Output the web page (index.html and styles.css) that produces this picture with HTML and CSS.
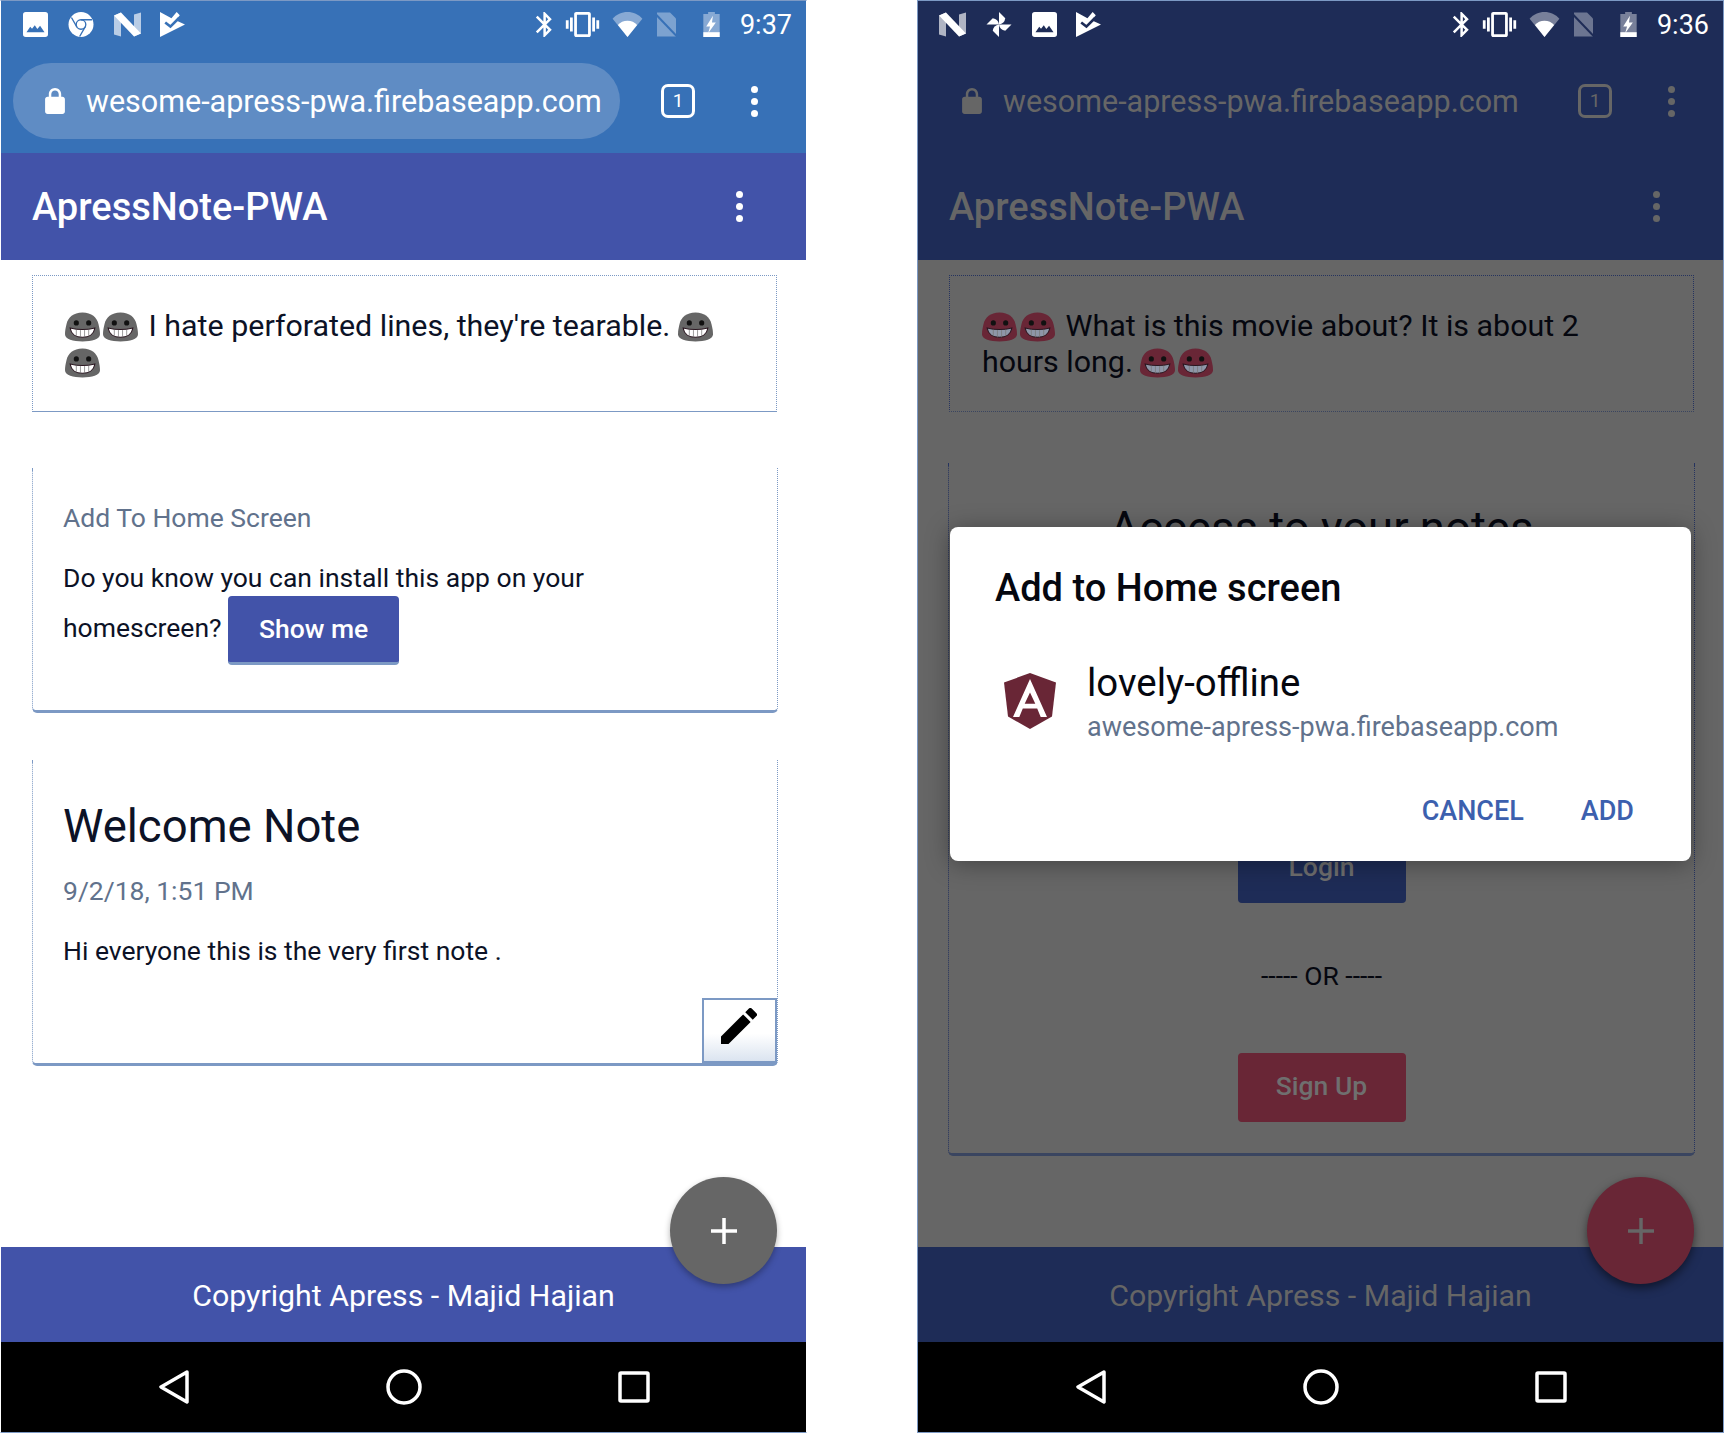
FILE: index.html
```html
<!DOCTYPE html>
<html lang="en">
<head>
    <meta charset="UTF-8">
    <title>ApressNote-PWA</title>
    <link rel="stylesheet" href="styles.css">
</head>
<body>
    <svg class="sprite" xmlns="http://www.w3.org/2000/svg">
        <symbol id="i-image" viewBox="3 3 18 18"><path fill-rule="evenodd" d="M5 3h14a2 2 0 0 1 2 2v14a2 2 0 0 1-2 2H5a2 2 0 0 1-2-2V5a2 2 0 0 1 2-2zm.5 14.500h13l-3.200-4.600-2 2.400-1.800-2.800-2 2.600-1.300-1.500z"/></symbol>
        <symbol id="i-chrome" viewBox="0 0 24 24"><circle cx="12" cy="12" r="12"/><circle class="cut" cx="12" cy="12" r="4.600" fill="none" stroke-width="1.300"/><path class="cut" fill="none" stroke-width="1.300" d="M12 7.400h10.500M8 14.300L2.800 5.300M16 14.300l-5.300 9.200"/></symbol>
        <symbol id="i-n" viewBox="0 0 27 24"><path opacity=".65" d="M0 3l7-3v24l-7-2zM20 2l7-2v21l-7 3z"/><path d="M0 3l7-3 20 21-7 3z"/></symbol>
        <symbol id="i-check" viewBox="0 0 24 24"><path d="M0 0l11 6 5-6 3 3-4 5 9 4L0 24z"/><path class="cut" fill="none" stroke-width="2.500" d="M5 10l5 4 8-8"/></symbol>
        <symbol id="i-pinwheel" viewBox="0 0 24 24">
            <path d="M12 12V0l6 6a7 7 0 0 1-6 6z"/>
            <path d="M12 12V0l6 6a7 7 0 0 1-6 6z" transform="rotate(90 12 12)"/>
            <path d="M12 12V0l6 6a7 7 0 0 1-6 6z" transform="rotate(180 12 12)"/>
            <path d="M12 12V0l6 6a7 7 0 0 1-6 6z" transform="rotate(270 12 12)"/>
        </symbol>
        <symbol id="i-bluetooth" viewBox="5 2 13 20"><path d="M17.710 7.710L12 2h-1v7.590L6.410 5 5 6.410 10.590 12 5 17.590 6.410 19 11 14.410V22h1l5.710-5.710-4.300-4.290 4.300-4.290zM13 5.830l1.880 1.880L13 9.590V5.830zm1.880 10.460L13 18.170v-3.760l1.880 1.880z"/></symbol>
        <symbol id="i-vibrate" viewBox="0 3 24 18"><path d="M0 15h2V9H0v6zm3 2h2V7H3v10zm19-8v6h2V9h-2zm-3 8h2V7h-2v10zM16.500 3h-9C6.670 3 6 3.670 6 4.500v15c0 .83.67 1.500 1.500 1.500h9c.83 0 1.500-.67 1.500-1.500v-15c0-.83-.67-1.500-1.500-1.500zM16 19H8V5h8v14z"/></symbol>
        <symbol id="i-wifi" viewBox="0 0 31 26"><path opacity=".4" d="M15.500 26L0 7C4 2.500 9.500 0 15.500 0S27 2.500 31 7z"/><path d="M15.500 26L5.500 13.500C8 10.500 11.500 9 15.500 9s7.500 1.500 10 4.500z"/></symbol>
        <symbol id="i-nosim" viewBox="0 0 22 24"><path opacity=".35" d="M2 0h13l6 6v18H2z"/><path class="cut" fill="none" stroke-width="2" d="M0 1l22 23"/></symbol>
        <symbol id="i-battery" viewBox="0 0 17 26"><path opacity=".4" d="M5 0h7v2h5v24H0V2h5z"/><path d="M0 21h17v5H0z"/><path d="M10 4L3 15h4l-2 7 8-11H9z"/></symbol>
        <symbol id="i-lock" viewBox="4 1 16 21"><path d="M18 8h-1V6c0-2.760-2.240-5-5-5S7 3.240 7 6v2H6c-1.100 0-2 .9-2 2v10c0 1.100.9 2 2 2h12c1.100 0 2-.9 2-2V10c0-1.100-.9-2-2-2zM9 6c0-1.660 1.340-3 3-3s3 1.340 3 3v2H9V6z"/></symbol>
        <symbol id="i-pencil" viewBox="3 3 18 18"><path d="M3 17.250V21h3.750L17.810 9.940l-3.750-3.750L3 17.250zM20.710 7.040a1 1 0 0 0 0-1.410l-2.340-2.340a1 1 0 0 0-1.410 0l-1.830 1.830 3.750 3.750 1.830-1.830z"/></symbol>
        <symbol id="i-blob" viewBox="0 0 34 28">
            <path d="M17 0c9 0 14 5 15.500 11 1 4 1.500 7 1.500 10 0 5-8 7-17 7S0 26 0 21c0-3 .5-6 1.500-10C3 5 8 0 17 0z"/>
            <circle cx="11" cy="10" r="2.500" fill="#111"/><circle cx="23" cy="10" r="2.500" fill="#111"/>
            <path class="teeth" stroke="#2a1620" stroke-width="1" d="M5 15c8 2 16 2 24 0-1 6-6 9-12 9S6 21 5 15z"/>
            <path fill="none" stroke="#777" stroke-width=".7" d="M11 16.500v6M15 17v7M19 17v7M23 16.500v6"/>
        </symbol>
    </svg>

    <!-- left phone -->
    <div class="phone">
        <div class="chrome">
            <div class="status">
                <div class="status-icons">
                    <svg class="icon w25"><use href="#i-image"/></svg>
                    <svg class="icon w28"><use href="#i-chrome"/></svg>
                    <svg class="icon w27"><use href="#i-n"/></svg>
                    <svg class="icon w25"><use href="#i-check"/></svg>
                </div>
                <div class="status-icons right">
                    <svg class="icon w18"><use href="#i-bluetooth"/></svg>
                    <svg class="icon w35"><use href="#i-vibrate"/></svg>
                    <svg class="icon w31"><use href="#i-wifi"/></svg>
                    <svg class="icon w22"><use href="#i-nosim"/></svg>
                    <svg class="icon w17 battery"><use href="#i-battery"/></svg>
                    <span class="time">9:37</span>
                </div>
            </div>
            <div class="address">
                <div class="pill">
                    <svg class="lock"><use href="#i-lock"/></svg>
                    <span class="url">wesome-apress-pwa.firebaseapp.com</span>
                </div>
                <span class="tabs">1</span>
                <div class="dots"><i></i><i></i><i></i></div>
            </div>
        </div>
        <header class="topbar">
            <span class="brand">ApressNote-PWA</span>
            <div class="dots"><i></i><i></i><i></i></div>
        </header>
        <main class="content">
            <div class="joke">
                <svg class="blob"><use href="#i-blob"/></svg><svg class="blob"><use href="#i-blob"/></svg>
                I hate perforated lines, they're tearable.
                <svg class="blob"><use href="#i-blob"/></svg><svg class="blob"><use href="#i-blob"/></svg>
            </div>
            <section class="card">
                <p class="muted">Add To Home Screen</p>
                <p class="install">Do you know you can install this app on your homescreen? <button class="btn">Show me</button></p>
            </section>
            <section class="card note">
                <h2 class="note-title">Welcome Note</h2>
                <p class="muted note-date">9/2/18, 1:51 PM</p>
                <p class="note-body">Hi everyone this is the very first note .</p>
                <button class="edit"><svg class="pencil"><use href="#i-pencil"/></svg></button>
            </section>
        </main>
        <footer class="footer">Copyright Apress - Majid Hajian</footer>
        <nav class="navbar">
            <svg class="nav-icon tri" viewBox="0 0 30 34"><path d="M28 2L2 17l26 15z"/></svg>
            <svg class="nav-icon circ" viewBox="0 0 36 36"><circle cx="18" cy="18" r="16"/></svg>
            <svg class="nav-icon squ" viewBox="0 0 32 32"><rect x="2" y="2" width="28" height="28" rx="1"/></svg>
        </nav>
        <div class="fab"><svg viewBox="0 0 28 28"><path d="M14 1v26M1 14h26"/></svg></div>
    </div>

    <!-- right phone, page dimmed behind the install dialog -->
    <div class="phone dim">
        <div class="chrome">
            <div class="status">
                <div class="status-icons">
                    <svg class="icon w27"><use href="#i-n"/></svg>
                    <svg class="icon w28"><use href="#i-pinwheel"/></svg>
                    <svg class="icon w25"><use href="#i-image"/></svg>
                    <svg class="icon w25"><use href="#i-check"/></svg>
                </div>
                <div class="status-icons right">
                    <svg class="icon w18"><use href="#i-bluetooth"/></svg>
                    <svg class="icon w35"><use href="#i-vibrate"/></svg>
                    <svg class="icon w31"><use href="#i-wifi"/></svg>
                    <svg class="icon w22"><use href="#i-nosim"/></svg>
                    <svg class="icon w17 battery"><use href="#i-battery"/></svg>
                    <span class="time">9:36</span>
                </div>
            </div>
            <div class="address">
                <div class="pill">
                    <svg class="lock"><use href="#i-lock"/></svg>
                    <span class="url">wesome-apress-pwa.firebaseapp.com</span>
                </div>
                <span class="tabs">1</span>
                <div class="dots"><i></i><i></i><i></i></div>
            </div>
        </div>
        <header class="topbar">
            <span class="brand">ApressNote-PWA</span>
            <div class="dots"><i></i><i></i><i></i></div>
        </header>
        <main class="content">
            <div class="joke">
                <svg class="blob"><use href="#i-blob"/></svg><svg class="blob"><use href="#i-blob"/></svg>
                What is this movie about? It is about 2 hours long.
                <svg class="blob"><use href="#i-blob"/></svg><svg class="blob"><use href="#i-blob"/></svg>
            </div>
            <section class="card login">
                <h2 class="login-title">Access to your notes</h2>
                <button class="btn wide">Login</button>
                <p class="or">----- OR -----</p>
                <button class="btn wide red">Sign Up</button>
            </section>
        </main>
        <footer class="footer">Copyright Apress - Majid Hajian</footer>
        <nav class="navbar">
            <svg class="nav-icon tri" viewBox="0 0 30 34"><path d="M28 2L2 17l26 15z"/></svg>
            <svg class="nav-icon circ" viewBox="0 0 36 36"><circle cx="18" cy="18" r="16"/></svg>
            <svg class="nav-icon squ" viewBox="0 0 32 32"><rect x="2" y="2" width="28" height="28" rx="1"/></svg>
        </nav>
        <div class="fab"><svg viewBox="0 0 28 28"><path d="M14 1v26M1 14h26"/></svg></div>

        <div class="dialog">
            <h3 class="dialog-title">Add to Home screen</h3>
            <div class="app-row">
                <svg class="ng-logo" viewBox="0 0 52 56">
                    <path fill="#692636" d="M26 0L52 9.500l-4 34L26 56 4 43.500 0 9.500z"/>
                    <path fill="#fff" d="M26 6L9 44h6.300l3.500-8.600h14.400l3.500 8.600H43zm0 13.500l5.300 11.200H20.700z"/>
                </svg>
                <div>
                    <div class="app-name">lovely-offline</div>
                    <div class="app-url">awesome-apress-pwa.firebaseapp.com</div>
                </div>
            </div>
            <div class="dialog-actions">
                <span>CANCEL</span>
                <span>ADD</span>
            </div>
        </div>
    </div>
</body>
</html>
```

FILE: styles.css
```css
* {
    margin: 0;
    padding: 0;
    box-sizing: border-box;
}
body {
    width: 1724px;
    height: 1435px;
    display: flex;
    justify-content: space-between;
    background: #fff;
    font-family: Roboto, "Liberation Sans", sans-serif;
    color: #0c1226;
    overflow: hidden;
}
.sprite {
    width: 0;
    height: 0;
    position: absolute;
}

/* phone frame */
.phone {
    --bar: #3771b7;
    --head: #4253a9;
    --foot: #4253a9;
    --line: #7c99c4;
    --shelf: #7c99c4;
    --teeth: #fff;
    position: relative;
    width: 807px;
    height: 1433px;
    display: flex;
    flex-direction: column;
    border: 1px solid #7c99c4;
    border-left-color: #fff;
    border-right-color: #fff;
    background: #fff;
    overflow: hidden;
}
.phone.dim {
    --bar: #1e2c57;
    --head: #1e2c57;
    --foot: #1e2c57;
    --line: #25335f;
    --shelf: #3a4560;
    --teeth: #8e96a8;
    border-color: #7c99c4;
    background: #666;
    color: #05070f;
}

/* browser chrome */
.chrome {
    height: 152px;
    background: var(--bar);
    color: #fff;
}
.status {
    height: 49px;
    display: flex;
    justify-content: space-between;
    align-items: center;
    padding: 0 14px 2px 22px;
}
.dim .status {
    padding-left: 21px;
}
.status-icons {
    display: flex;
    align-items: center;
    gap: 19px;
}
.status-icons.right {
    gap: 12px;
}
.icon {
    height: 25px;
    fill: currentColor;
}
.w17 { width: 17px; }
.w18 { width: 18px; }
.w22 { width: 22px; }
.w25 { width: 25px; }
.w27 { width: 27px; }
.w28 { width: 28px; }
.w31 { width: 31px; }
.w35 { width: 35px; }
.battery {
    margin-left: 14px;
}
.time {
    margin-left: 8px;
    font-size: 27px;
}
.cut {
    stroke: var(--bar);
}
.address {
    height: 103px;
    display: flex;
    align-items: flex-start;
    padding: 13px 35px 0 12px;
}
.pill {
    width: 607px;
    height: 76px;
    display: flex;
    align-items: center;
    gap: 20px;
    padding-left: 31px;
    border-radius: 38px;
    background: #5f8cc4;
    font-size: 30.500px;
}
.dim .pill {
    background: transparent;
    color: #666;
}
.lock {
    width: 22px;
    height: 26px;
    fill: currentColor;
}
.tabs {
    width: 34px;
    height: 34px;
    margin: 21px 0 0 41px;
    border: 3px solid currentColor;
    border-radius: 7px;
    font-size: 19px;
    line-height: 28px;
    text-align: center;
}
.dim .tabs,
.dim .address .dots {
    color: #666;
}
.dots {
    display: flex;
    flex-direction: column;
    gap: 5px;
}
.dots i {
    width: 7px;
    height: 7px;
    border-radius: 50%;
    background: currentColor;
}
.address .dots {
    margin: 23px 0 0 56px;
}

/* app bar */
.topbar {
    height: 107px;
    display: flex;
    justify-content: space-between;
    align-items: center;
    padding: 0 63px 0 31px;
    background: var(--head);
    color: #fff;
}
.dim .topbar {
    color: #666;
}
.brand {
    font-size: 38px;
    font-weight: 500;
}

/* page content */
.content {
    flex: 1;
    padding: 15px 29px 0 31px;
}
.joke {
    height: 137px;
    padding: 32px 30px 0 32px;
    border: 1px dotted var(--line);
    border-bottom-color: var(--shelf);
    margin-bottom: 56px;
    font-size: 30.400px;
    line-height: 36px;
}
.dim .joke {
    padding-right: 60px;
}
.phone:not(.dim) .joke {
    border-bottom-style: solid;
}
.blob {
    width: 35px;
    height: 30px;
    margin-right: 3px;
    vertical-align: -6px;
    fill: #666;
}
.dim .blob {
    fill: #692636;
}
.teeth {
    fill: var(--teeth);
}
.card {
    height: 245px;
    padding: 33px 30px 0;
    margin: 0 -1px 47px 0;
    border-left: 1px dotted var(--line);
    border-right: 1px dotted var(--line);
    border-bottom: 3px solid var(--shelf);
    border-radius: 0 0 5px 5px;
    font-size: 26.500px;
}
.muted {
    color: #61728c;
    line-height: 34px;
}
.install {
    margin-top: 18px;
    line-height: 50px;
}
.btn {
    display: inline-block;
    width: 171px;
    height: 69px;
    margin: -12px 0;
    border: 0;
    border-bottom: 3px solid #7c99c4;
    border-radius: 4px;
    background: #4253a9;
    color: #fff;
    font-family: inherit;
    font-size: 26.500px;
    font-weight: 500;
    vertical-align: middle;
}
.note {
    height: 306px;
    display: flex;
    flex-direction: column;
}
.note-title {
    font-size: 45.500px;
    font-weight: 400;
    line-height: 52px;
    margin-top: 8px;
}
.note-date {
    margin-top: 21px;
}
.note-body {
    margin-top: 26px;
    line-height: 34px;
}
.edit {
    position: absolute;
    left: 701px;
    top: 997px;
    width: 75px;
    height: 65px;
    border: 2px solid #7c99c4;
    background: linear-gradient(#fff 55%, #dbe4f0);
}
.pencil {
    width: 36px;
    height: 36px;
    display: block;
    margin: 0 0 9px 17px;
}

/* login card behind the dialog */
.login {
    height: 693px;
    margin: -5px -1px 0;
    padding-top: 36px;
    text-align: center;
}
.login-title {
    font-size: 45.500px;
    font-weight: 400;
    line-height: 60px;
}
.wide {
    display: block;
    width: 168px;
    margin: 0 auto;
    padding-bottom: 4px;
    background: #1e2c57;
    color: #6f6f6f;
    border-bottom: 0;
}
.login .wide:first-of-type {
    margin-top: 275px;
}
.wide.red {
    background: #692636;
}
.or {
    margin: 53px 0 58px;
    line-height: 39px;
    font-size: 26.500px;
}

/* footer and android nav */
.footer {
    height: 95px;
    display: flex;
    justify-content: center;
    align-items: center;
    padding-top: 2px;
    background: var(--foot);
    color: #fff;
    font-size: 30.300px;
}
.dim .footer {
    color: #666;
}
.navbar {
    height: 90px;
    display: grid;
    grid-template-columns: repeat(3, 230px);
    justify-content: center;
    justify-items: center;
    align-items: center;
    background: #000;
}
.nav-icon {
    height: 34px;
    fill: none;
    stroke: #fff;
    stroke-width: 3.500;
    stroke-linejoin: round;
}
.tri { width: 30px; }
.circ {
    width: 36px;
    height: 36px;
}
.squ {
    width: 32px;
    height: 32px;
}
.fab {
    position: absolute;
    left: 669px;
    top: 1176px;
    width: 107px;
    height: 107px;
    display: flex;
    justify-content: center;
    align-items: center;
    border-radius: 50%;
    background: #666;
    box-shadow: 0 3px 6px rgba(0, 0, 0, .3);
    color: #fff;
}
.dim .fab {
    background: #692636;
    color: #666;
    box-shadow: 0 4px 10px rgba(0, 0, 0, .5);
}
.fab svg {
    width: 28px;
    height: 28px;
    fill: none;
    stroke: currentColor;
    stroke-width: 3.500;
}

/* install dialog */
.dialog {
    position: absolute;
    left: 32px;
    top: 526px;
    width: 741px;
    height: 334px;
    padding: 39px 57px 0 45px;
    border-radius: 8px;
    background: #fff;
    box-shadow: 0 3px 24px rgba(0, 0, 0, .35);
}
.dialog-title {
    font-size: 38px;
    font-weight: 500;
    line-height: 44px;
}
.app-row {
    display: flex;
    align-items: flex-start;
    gap: 31px;
    margin-top: 51px;
    padding-left: 9px;
}
.ng-logo {
    width: 52px;
    height: 56px;
    margin-top: 12px;
}
.app-name {
    font-size: 38.400px;
    line-height: 44px;
}
.app-url {
    margin-top: 4px;
    color: #61728c;
    font-size: 27px;
    line-height: 36px;
}
.dialog-actions {
    display: flex;
    justify-content: flex-end;
    gap: 57px;
    margin-top: 48px;
    color: #3c60ae;
    font-size: 27px;
    font-weight: 500;
    line-height: 36px;
}
```
